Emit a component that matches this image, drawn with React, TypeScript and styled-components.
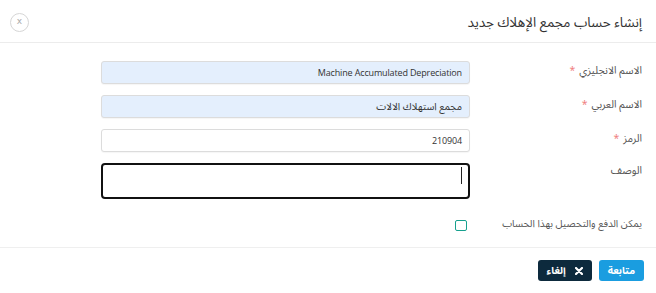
import React from "react";
import styled, { createGlobalStyle } from "styled-components";

const Global = createGlobalStyle`
  html, body { margin: 0; padding: 0; background: #fff; }
  body { font-family: "Noto Sans Arabic", "Noto Kufi Arabic", "DejaVu Sans", sans-serif; }
  * { box-sizing: border-box; }
`;

const Modal = styled.div`
  width: 656px;
  height: 293px;
  direction: rtl;
  background: #fff;
  display: flex;
  flex-direction: column;
`;

const Header = styled.div`
  flex-shrink: 0;
  height: 43px;
  border-bottom: 1px solid #ececec;
  display: flex;
  align-items: center;
  justify-content: space-between;
  padding: 2px 14px 0 10px;
`;

const Title = styled.h4`
  margin: 0;
  font-size: 13.5px;
  font-weight: 400;
  color: #333;
`;

const CloseBtn = styled.button`
  width: 19px;
  height: 19px;
  border-radius: 50%;
  border: 1px solid #d6d6d6;
  background: #fff;
  color: #aaa;
  font-family: "DejaVu Sans", sans-serif;
  font-size: 9px;
  line-height: 1;
  padding: 0 0 1px;
  display: flex;
  align-items: center;
  justify-content: center;
`;

const Body = styled.div`
  padding: 18px 14px 0 14px;
  display: flex;
  flex-direction: column;
  gap: 11px;
  flex: 1;
  min-height: 0;
  border-bottom: 1px solid #efefef;
`;

const Row = styled.div<{ $top?: boolean }>`
  display: grid;
  grid-template-columns: 172px 369px;
  align-items: ${(p) => (p.$top ? "start" : "center")};
`;

const Label = styled.label`
  font-size: 10.5px;
  line-height: 14px;
  color: #555;
  text-align: right;
  white-space: nowrap;
  padding-bottom: 4px;
`;

const Star = styled.span`
  color: #f07f7f;
  margin-right: 4px;
`;

const Input = styled.div<{ $readonly?: boolean }>`
  height: 23px;
  border: 1px solid #dcdcdc;
  border-radius: 3px;
  background: ${(p) => (p.$readonly ? "#e4effd" : "#fff")};
  box-shadow: 0 1px 1px rgba(0, 0, 0, 0.04);
  display: flex;
  align-items: center;
  padding: 0 7px;
  font-size: 10px;
  line-height: 14px;
  color: #333;
  direction: rtl;
`;

const Latin = styled.span`
  font-family: "Open Sans", "Liberation Sans", sans-serif;
  font-size: 9px;
  letter-spacing: -0.15px;
  direction: ltr;
`;

const TextArea = styled.div`
  position: relative;
  height: 36px;
  border: 2px solid #111;
  border-radius: 4px;
  background: #fff;
`;

const Caret = styled.span`
  position: absolute;
  right: 6px;
  top: 2px;
  width: 1px;
  height: 17px;
  background: #222;
`;

const TopLabel = styled(Label)`
  padding-top: 1px;
`;

const CheckRow = styled(Row)`
  padding-top: 7px;
`;

const CheckLabel = styled.span`
  font-size: 10px;
  line-height: 14px;
  color: #555;
  white-space: nowrap;
  padding-bottom: 3px;
`;

const CheckBox = styled.span`
  width: 12px;
  height: 11px;
  border: 1.5px solid #17a08e;
  border-radius: 2px;
  margin-right: 3px;
`;

const Footer = styled.div`
  flex-shrink: 0;
  height: 45px;
  display: flex;
  align-items: center;
  gap: 7px;
  padding: 0 12px 0 0;
`;

const Button = styled.button<{ $variant: "primary" | "dark" }>`
  height: 21px;
  border: none;
  border-radius: 3px;
  color: #fff;
  background: ${(p) => (p.$variant === "primary" ? "#1a9de0" : "#0d2a3d")};
  font-family: inherit;
  font-size: 10px;
  font-weight: 700;
  padding: 0 9px;
  display: flex;
  align-items: center;
  gap: 9px;
  direction: rtl;
`;

const XIcon = () => (
  <svg width="8" height="8" viewBox="0 0 8 8">
    <path d="M1 1 L7 7 M7 1 L1 7" stroke="#fff" strokeWidth="2.2" strokeLinecap="round" />
  </svg>
);

export default function App() {
  return (
    <>
      <Global />
      <Modal>
        <Header>
          <Title>إنشاء حساب مجمع الإهلاك جديد</Title>
          <CloseBtn>x</CloseBtn>
        </Header>
        <Body>
          <Row>
            <Label>
              الاسم الانجليزي<Star>*</Star>
            </Label>
            <Input $readonly>
              <Latin>Machine Accumulated Depreciation</Latin>
            </Input>
          </Row>
          <Row>
            <Label>
              الاسم العربي<Star>*</Star>
            </Label>
            <Input $readonly>مجمع استهلاك الالات</Input>
          </Row>
          <Row>
            <Label>
              الرمز<Star>*</Star>
            </Label>
            <Input>
              <Latin>210904</Latin>
            </Input>
          </Row>
          <Row $top>
            <TopLabel>الوصف</TopLabel>
            <TextArea>
              <Caret />
            </TextArea>
          </Row>
          <CheckRow>
            <CheckLabel>يمكن الدفع والتحصيل بهذا الحساب</CheckLabel>
            <CheckBox />
          </CheckRow>
        </Body>
        <Footer>
          <Button $variant="primary">متابعة</Button>
          <Button $variant="dark">
            <XIcon />
            إلغاء
          </Button>
        </Footer>
      </Modal>
    </>
  );
}
